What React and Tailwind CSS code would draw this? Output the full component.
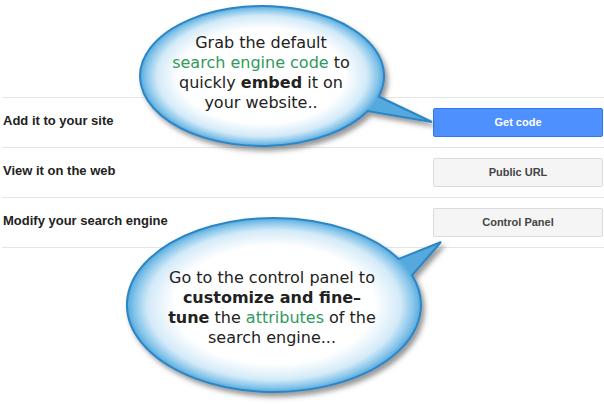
import React from 'react'

const rows = [
  { label: 'Add it to your site', button: 'Get code', primary: true },
  { label: 'View it on the web', button: 'Public URL' },
  { label: 'Modify your search engine', button: 'Control Panel' },
]

function BubbleStops() {
  return (
    <>
      <stop offset="0" stopColor="#ffffff" />
      <stop offset="0.68" stopColor="#ffffff" />
      <stop offset="0.86" stopColor="#d3eaf8" />
      <stop offset="0.95" stopColor="#86c5ea" />
      <stop offset="1" stopColor="#55a9dd" />
    </>
  )
}

function Bubbles() {
  return (
    <svg className="absolute inset-0 pointer-events-none" width="604" height="404" viewBox="0 0 604 404">
      <defs>
        <filter id="bubbleShadow" x="-20%" y="-20%" width="140%" height="150%">
          <feDropShadow dx="3" dy="4" stdDeviation="2.5" floodColor="#555" floodOpacity="0.6" />
        </filter>
        <radialGradient
          id="topFill"
          gradientUnits="userSpaceOnUse"
          cx="262"
          cy="76"
          r="122"
          gradientTransform="translate(262 76) scale(1 0.574) translate(-262 -76)"
        >
          <BubbleStops />
        </radialGradient>
        <radialGradient
          id="bottomFill"
          gradientUnits="userSpaceOnUse"
          cx="274"
          cy="305"
          r="147"
          gradientTransform="translate(274 305) scale(1 0.592) translate(-274 -305)"
        >
          <BubbleStops />
        </radialGradient>
      </defs>
      <path
        d="M378.7 96.5 L432 122 L367.7 111 A122 70 0 1 1 378.7 96.5 Z"
        fill="url(#topFill)"
        stroke="#2a86c6"
        strokeWidth="2"
        filter="url(#bubbleShadow)"
      />
      <path
        d="M398.7 258.9 L441 242 L412.1 275.2 A147 87 0 1 1 398.7 258.9 Z"
        fill="url(#bottomFill)"
        stroke="#2a86c6"
        strokeWidth="2"
        filter="url(#bubbleShadow)"
      />
    </svg>
  )
}

export default function App() {
  return (
    <div className="relative w-[604px] h-[404px] overflow-hidden bg-white font-['Liberation_Sans',Arial,sans-serif]">
      <div className="pt-[97px] pl-[2px]">
        {rows.map((row) => (
          <div key={row.label} className="flex items-center justify-between h-[50px] border-t border-[#e5e5e5] pl-px">
            <span className="-mt-[3px] text-[13px] font-bold text-[#222]">{row.label}</span>
            <button
              type="button"
              className={`w-[170px] h-[29px] mr-px rounded-[2px] text-[11px] font-bold border ${
                row.primary
                  ? 'bg-[#4d90fe] border-[#3079ed] text-white'
                  : 'bg-[#f5f5f5] border-[#dcdcdc] text-[#444]'
              }`}
            >
              {row.button}
            </button>
          </div>
        ))}
        <div className="border-t border-[#e5e5e5]" />
      </div>

      <Bubbles />

      <p className="absolute left-[131px] top-[33px] w-[260px] text-center text-[16px] leading-[20px] text-[#222] font-['DejaVu_Sans',Verdana,sans-serif]">
        Grab the default
        <br />
        <span className="text-[#2e9a5c]">search engine code</span> to
        <br />
        quickly <b>embed</b> it on
        <br />
        your website..
      </p>

      <p className="absolute left-[127px] top-[268px] w-[290px] text-center text-[16px] leading-[20px] text-[#222] font-['DejaVu_Sans',Verdana,sans-serif]">
        Go to the control panel to
        <br />
        <b>customize and fine–</b>
        <br />
        <b>tune</b> the <span className="text-[#2e9a5c]">attributes</span> of the
        <br />
        search engine...
      </p>
    </div>
  )
}
